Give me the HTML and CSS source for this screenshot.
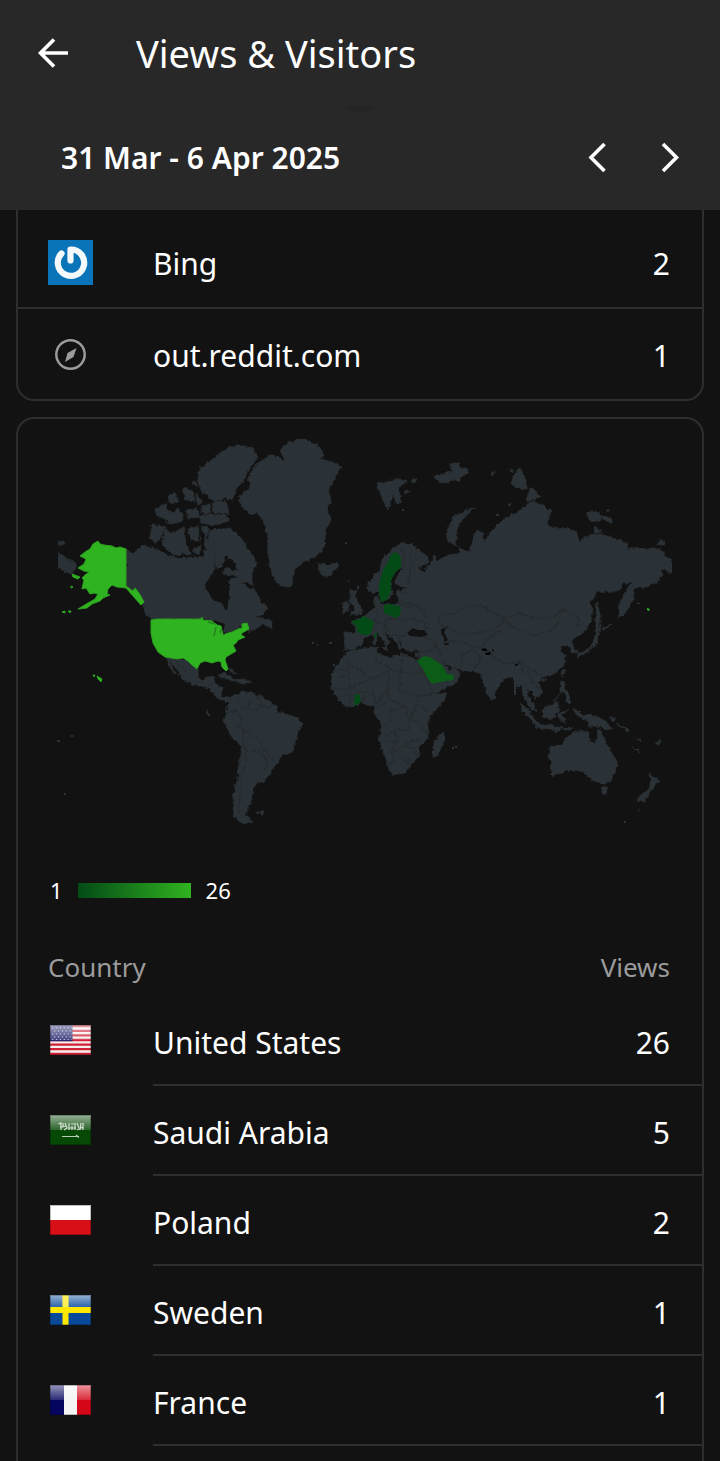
FILE: index.html
```html
<!DOCTYPE html>
<html lang="en">
<head>
<meta charset="utf-8">
<meta name="viewport" content="width=device-width, initial-scale=1">
<title>Views &amp; Visitors</title>
<link rel="stylesheet" href="styles.css">
</head>
<body>
<header class="app-bar">
  <div class="title-row">
    <button class="icon-button" type="button" aria-label="Back">
      <svg viewBox="0 0 48 48" width="48" height="48"><path d="M38 24H11M24 10.500L10.500 24L24 37.500"/></svg>
    </button>
    <h1 class="title">Views &amp; Visitors</h1>
  </div>
  <div class="date-row">
    <p class="date">31 Mar - 6 Apr 2025</p>
    <button class="icon-button" type="button" aria-label="Previous period">
      <svg viewBox="0 0 48 48" width="48" height="48"><path d="M30.500 10L17 23.500L30.500 37"/></svg>
    </button>
    <button class="icon-button" type="button" aria-label="Next period">
      <svg viewBox="0 0 48 48" width="48" height="48"><path d="M17 10L30.500 23.500L17 37"/></svg>
    </button>
  </div>
</header>
<main class="content">
  <section class="card referrers">
    <ul class="ref-list">
      <li class="ref-row">
        <svg class="ref-icon" viewBox="0 0 45 45" width="45" height="45">
          <rect width="45" height="45" fill="#0a74b8"/>
          <path d="M13.500 13.500A13.200 13.200 0 1 0 22.500 9.500V20.500" fill="none" stroke="#f4f9fc" stroke-width="6.200" stroke-linecap="round" stroke-linejoin="round"/>
        </svg>
        <span class="ref-name">Bing</span><span class="ref-views">2</span>
      </li>
      <li class="ref-row">
        <svg class="ref-icon" viewBox="0 0 45 45" width="45" height="45">
          <circle cx="22.500" cy="22.500" r="14.200" fill="none" stroke="#9b9b9b" stroke-width="2.500"/>
          <path d="M28.500 16L25.500 25L17 30L19.500 21Z" fill="#9b9b9b"/>
        </svg>
        <span class="ref-name">out.reddit.com</span><span class="ref-views">1</span>
      </li>
    </ul>
  </section>

  <section class="card countries">
    <svg class="map" viewBox="48 419 624 445" role="img" aria-label="Views by country">
      <defs>
        <filter id="coast" x="0" y="0" width="100%" height="100%">
          <feTurbulence type="fractalNoise" baseFrequency=".22" numOctaves="2" seed="4" result="n"/>
          <feDisplacementMap in="SourceGraphic" in2="n" scale="5" xChannelSelector="R" yChannelSelector="G"/>
        </filter>
      </defs>
      <g class="land" filter="url(#coast)">
        <!-- Chukotka and Wrangel, west of the date line -->
        <path d="M58 551L66 558L77 565L73 572L67 573L58 568ZM58 541L62 541L65 544L58 545Z"/>
        <!-- Canada -->
        <path d="M126 549L133 553L138 549L145 545L152 548L163 552L170 557L183 558L196 557L204 559L205 549L200 540L203 533L209 543L215 553L215 567L210 577L204 585L212 599L222 604L227 612L230 600L230 590L229 580L238 578L250 590L254 586L258 597L268 609L262 615L255 617L266 619L272 621L272 628L262 624L258 628L249 632L247 623L242 624L238 629L222 634L216 624L202 619L152 619L145 613L143 604L133 591L126 586Z"/>
        <!-- Arctic archipelago -->
        <path d="M210 530L230 528L240 537L253 557L258 563L252 570L252 585L244 582L234 575L222 574L226 568L237 571L235 562L225 555L222 566L217 570L215 553L208 543Z"/>
        <path d="M207 463L222 452L233 446L245 446L253 448L258 457L250 468L243 482L235 490L233 500L226 498L214 502L205 493L200 483L200 470Z"/>
        <path d="M212 503L226 501L229 514L213 512ZM200 515L226 515L229 521L214 525L200 523Z"/>
        <path d="M152 525L165 527L163 533L157 543L150 538Z"/>
        <path d="M165 530L173 533L184 528L186 545L192 555L182 554L173 555L162 545Z"/>
        <path d="M155 510L167 502L166 510L173 512L178 508L184 516L182 521L172 525L163 518L157 515ZM168 498L175 492L178 500L173 504ZM183 487L193 492L195 502L185 500ZM195 492L203 502L198 505Z"/>
        <path d="M186 511L196 508L200 517L188 518ZM188 528L199 527L198 541L191 540ZM202 526L209 528L205 543L201 540ZM193 481L196 482L197 488ZM202 506L210 504L210 513L202 513ZM193 548L201 546L200 554L194 553Z"/>
        <path d="M200 467L205 470L210 488L203 493L197 480ZM215 558L219 560L217 568Z"/>
        <!-- Greenland -->
        <path d="M280 450L290 442L302 439L317 444L325 455L320 459L332 462L341 467L333 480L328 493L331 503L327 510L331 520L325 530L325 545L318 555L303 562L295 568L290 588L278 585L272 573L268 553L268 537L263 520L258 513L250 515L242 507L239 497L250 487L248 478L257 463L272 455L282 459Z"/>
        <path d="M318 563L326 565L337 563L338 568L328 577L320 573Z"/>
        <!-- Mexico, Central America, Caribbean -->
        <path d="M165 657L177 659L188 661L192 665L198 669L198 677L203 682L208 677L216 677L213 684L222 687L221 696L232 698L229 702L220 700L210 689L195 685L183 680L176 667L170 661L173 669L178 676L172 671Z"/>
        <path d="M217 675L225 673L236 680L231 681ZM235 680L244 679L251 682L240 684ZM229 667L233 670L236 675L233 674Z"/>
        <!-- South America -->
        <path d="M232 697L242 691L258 695L275 705L278 712L295 717L302 724L297 735L292 752L280 757L278 763L268 775L265 782L257 783L253 790L250 803L245 813L253 822L242 824L234 815L233 797L238 777L242 747L232 737L224 722L227 710Z"/>
        <path d="M257 812L265 812L261 815ZM206 711L209 714L207 716Z"/>
        <!-- Svalbard, Franz Josef, Novaya Zemlya, Severnaya Zemlya -->
        <path d="M377 483L388 482L400 478L407 482L398 488L401 502L397 504L393 495L388 510L382 498ZM412 480L417 479L413 482ZM404 492L411 491L406 494Z"/>
        <path d="M434 477L444 473L452 472L450 464L459 462L460 468L468 469L468 474L460 476L460 482L454 479L449 482L440 483Z"/>
        <path d="M475 507L463 518L457 530L455 540L457 546L447 542L448 530L453 517L467 510Z"/>
        <path d="M514 475L520 468L524 476L527 489L518 488L511 484ZM531 487L536 492L540 498L526 501ZM491 473L495 472L492 476ZM510 470L514 470L512 473ZM587 513L595 511L603 516L600 521L590 521ZM603 516L612 519L611 522L605 521ZM595 525L601 532L594 532ZM658 541L665 541L664 545L657 544ZM606 510L610 510L607 512Z"/>
        <!-- Eurasia -->
        <path d="M368 590L368 582L380 570L383 558L393 548L403 543L413 545L428 558L428 563L420 565L423 572L432 562L433 555L438 561L443 557L462 552L457 547L470 553L472 543L477 530L482 533L484 543L487 537L493 530L503 520L520 510L533 501L550 510L548 525L560 530L568 528L577 532L579 542L584 538L595 533L610 537L627 543L628 549L657 548L672 560L672 573L662 570L660 580L645 588L635 587L633 598L627 610L620 617L619 603L627 590L632 583L624 583L617 592L598 591L590 602L593 610L590 623L580 635L571 641L577 652L572 653L568 645L560 647L565 657L563 667L555 673L543 677L538 682L543 692L535 699L532 692L527 688L527 695L533 703L536 712L530 708L523 695L522 685L517 688L513 677L507 677L500 685L495 692L494 700L491 700L485 687L481 675L477 673L472 670L460 670L448 665L442 662L448 670L454 668L460 673L457 682L433 694L430 685L417 662L420 653L420 649L411 651L403 648L402 641L398 640L403 649L400 650L396 642L390 636L382 629L390 641L387 647L384 642L377 632L373 635L365 637L362 643L355 649L345 650L344 632L357 633L355 625L351 622L363 617L372 610L375 607L374 597L378 596L380 604L390 605L398 603L397 592L408 588L398 586L394 580L402 569L397 567L390 579L392 594L384 602L380 593L374 592Z"/>
        <!-- Britain and Ireland -->
        <path d="M350 590L357 592L355 598L361 606L363 612L350 616L355 608L350 601ZM343 603L349 602L349 611L342 613Z"/>
        <path d="M374 634L377 635L376 644L373 643ZM382 648L388 647L387 651ZM400 654L407 655L402 656ZM415 654L419 653L417 656Z"/>
        <!-- Africa and Madagascar -->
        <path d="M355 650L377 647L378 653L388 658L397 655L415 658L420 668L430 687L433 694L447 694L443 702L427 720L428 738L419 747L419 755L405 773L392 775L385 757L379 742L382 725L374 713L375 707L363 703L348 707L337 698L331 688L333 670L343 658L347 652Z"/>
        <path d="M443 732L445 739L437 757L433 757L433 743Z"/>
        <!-- Sakhalin, Japan, Taiwan -->
        <path d="M597 603L600 615L600 622L597 628L602 625L598 634L596 645L585 653L578 657L577 653L589 649L594 641L596 629L596 615ZM603 628L612 623L605 630ZM617 617L620 614L618 619ZM561 673L564 670L563 677ZM540 680L546 678L543 682Z"/>
        <!-- Philippines and Indonesia -->
        <path d="M561 681L565 682L564 689L569 692L571 704L565 702L566 694L560 691ZM553 701L561 692L556 699Z"/>
        <path d="M519 703L527 708L538 723L534 723L524 713ZM535 723L549 725L562 728L560 731L550 730L536 727ZM542 710L557 701L559 709L553 719L543 717ZM559 713L569 710L562 714L566 722L559 721ZM562 728L573 727L567 730Z"/>
        <path d="M573 709L577 710L582 715L594 715L605 721L612 730L604 729L598 726L590 727L588 720L576 715ZM611 718L616 718L612 722ZM617 724L630 731L628 733ZM636 737L641 741ZM633 747L640 751L638 752ZM655 743L661 740L659 745Z"/>
        <!-- Australia, Tasmania, New Zealand -->
        <path d="M549 755L550 748L562 744L570 735L577 731L588 732L588 739L595 744L599 729L605 741L612 754L617 762L615 772L609 782L600 784L590 778L585 773L577 770L569 770L554 776L551 773L552 764L548 757ZM601 787L607 787L606 794L602 794Z"/>
        <path d="M648 773L655 778L659 781L652 789L644 801L638 802L640 796L648 790L652 782ZM637 811L639 809L638 812Z"/>
      </g>
      <!-- Inland seas and bays -->
      <g class="water">
        <path d="M407 633L413 628L418 630L424 630L428 635L421 637L410 636ZM441 629L448 626L444 632L448 640L449 645L444 645L444 638L441 633Z"/>
        <path d="M205 585L210 577L221 579L229 584L229 597L226 602L226 611L222 603L212 599Z"/>
        <path d="M418 566L424 570L427 567L425 572L420 570ZM201 530L205 534L204 545L207 551L201 548ZM280 451L284 459L283 461L278 454Z"/>
        <path d="M214 620L225 624L223 633L217 627L212 623Z"/>
      </g>
      <!-- National boundaries -->
      <g class="borders" filter="url(#coast)">
        <path d="M439 625L440 615L455 614L463 608L480 605L492 612L503 618L520 613L535 619L554 617L562 609L573 613L580 621L577 626M503 618L512 627L535 636L552 630L557 624L562 609M480 605L488 608M439 625L460 634L473 634L483 632L500 626L505 619M444 642L458 641L473 647L483 647L488 638L503 630M489 650L494 658L507 664L521 662L523 675M461 669L461 655L474 649L481 659L474 669M521 662L528 668L541 675M528 668L532 681L540 690M425 637L434 641L442 657M417 651L427 652L434 648M405 636L391 635M390 618L402 620L412 619L424 622L427 630M398 603L409 607L418 606L428 617M401 548L405 557L402 570M411 549L411 564L408 585M377 607L375 622L383 624L390 630M383 624L391 619M401 592L411 594M400 600L416 606"/>
        <path d="M376 648L376 660L401 675L402 658M348 657L348 663L360 670L372 679L389 671M333 671L349 669M348 663L350 688L331 688M350 688L359 684L372 679M337 697L350 695L350 706M356 692L373 692L376 706M389 671L388 690L377 703M401 675L399 691L419 696L433 694M401 658L403 673L426 673M388 690L389 699L376 709M389 699L405 706L390 712L391 720L382 729M405 706L409 719L408 730L394 729L390 735L382 735M409 719L420 723L428 735M409 719L418 704L428 712M417 703L420 694M394 729L397 741L380 742M397 741L392 751L402 748L410 741L420 740M392 751L393 762L387 764M402 748L415 748L417 758M402 757L407 764L410 761L407 758M347 675L340 677M366 692L362 704"/>
        <path d="M238 697L240 706L249 709L251 700M226 713L236 711L243 720L237 726L244 729L251 735L260 741L263 749L270 755L274 762M244 729L243 742L246 751L259 750L265 758L269 763L264 771M246 751L245 765L241 780L240 795L239 810L242 818M258 696L262 706L268 709L273 704M249 709L258 711L259 704M175 660L190 674M208 687L213 682"/>
      </g>
      <g class="voids"><path d="M481 649L485 648L488 651L483 651ZM485 653L491 652L490 655L486 655ZM492 649L494 650L493 652ZM514 665L520 663L516 666Z"/></g>
      <!-- Countries with views -->
      <path class="high" d="M98 541L100 544L104 545L112 546L116 548L120 547L126 549L126 586L133 591L135 588L139 593L144 602L141 605L133 596L126 588L117 587L112 585L108 589L107 594L110 595L103 598L100 601L92 604L87 608L78 609L88 603L95 599L98 594L94 593L90 594L86 588L82 589L84 580L82 578L85 575L89 572L84 571L78 568L84 564L86 559L80 556L85 552L90 549L93 544ZM72 574L80 577L78 579L73 577ZM62 612L65 611L65 613ZM68 611L71 611L70 613ZM71 586L73 587L71 588ZM93 675L95 675L94 677ZM97 676L102 679L101 682L98 679Z"/>
      <path class="high" d="M151 620L157 619L201 619L202 617L203 620L212 621L217 625L221 626L223 635L228 633L232 632L238 629L242 628L242 624L247 623L249 629L242 633L241 635L245 637L238 640L236 643L233 645L236 651L231 654L226 657L225 660L228 669L226 671L222 667L221 662L218 661L212 663L205 661L200 663L197 669L192 665L188 661L183 658L177 659L165 657L158 652L153 643L151 633Z"/>
      <path class="lake" d="M208 622L216 624M216 627L214 636M221 629L220 633"/>
      <path class="low" d="M397 552L401 558L401 567L395 573L391 581L391 591L387 600L381 602L379 595L379 584L383 570L388 562L391 554ZM384 605L391 604L401 607L400 615L396 618L384 613ZM351 621L357 620L364 616L374 622L373 627L371 633L366 636L357 632L357 627ZM375 633L377 633L376 638L374 637ZM355 695L359 694L361 702L354 706Z"/>
      <path class="mid" d="M417 661L424 656L430 657L442 665L447 674L454 675L453 680L440 682L432 684L427 677L423 669Z"/>
      <path class="dot" d="M647 608L650 609L649 611L647 610Z"/>
      <path class="islands" d="M329 642H332V644H329ZM333 664H335V666H333ZM312 642H314V644H312ZM317 644H318V646H317ZM402 509H404V511H402ZM345 542H347V544H345ZM348 580H349V582H348ZM357 586H359V589H357ZM57 740H60V742H57ZM71 735H73V737H71ZM64 793H66V795H64ZM452 747H454V749H452ZM455 746H457V748H455ZM624 821H626V823H624ZM637 602L641 604H637ZM496 514H499V516H496ZM508 504L512 503L509 507ZM514 680H516V695H514Z"/>
    </svg>
    <div class="legend"><span>1</span><span class="scale"></span><span>26</span></div>
    <table class="table">
      <thead><tr><th colspan="2" scope="col">Country</th><th class="num" scope="col">Views</th></tr></thead>
      <tbody>
        <tr><td class="flag-cell"><svg class="flag" viewBox="0 0 41 30">
          <rect width="41" height="30" fill="#f5eeee"/>
          <path d="M0 1.200H41M0 5.800H41M0 10.400H41M0 15H41M0 19.600H41M0 24.200H41M0 28.800H41" stroke="#cf2035" stroke-width="2.300"/>
          <rect width="22.500" height="16.200" fill="#24256f"/>
          <path d="M2 3H22M4 6H22M2 9H22M4 12H22M2 14.500H22" stroke="#b9b9d8" stroke-width="1" stroke-dasharray="1.300 2.600"/>
          <rect width="41" height="15" fill="url(#gloss)"/><rect class="flag-edge" x=".5" y=".5" width="40" height="29"/>
        </svg></td><td>United States</td><td class="num">26</td></tr>
        <tr><td class="flag-cell"><svg class="flag" viewBox="0 0 41 30">
          <defs><linearGradient id="gloss" x2="0" y2="1"><stop stop-color="#fff" stop-opacity=".58"/><stop offset="1" stop-color="#fff" stop-opacity=".15"/></linearGradient></defs>
          <rect width="41" height="30" fill="#064806"/><rect width="41" height="15" fill="url(#gloss)"/>
          <path d="M8.500 9L11 8V15M13 8V12H10M15 8L17 13L14 15M19 8V15M21 9H24M22 11V15M25 8V15M27 8L29 13M31 8L30 15M33 8V15M10 12L16 11M18 13H26M27 15L33 12" fill="none" stroke="#d7e2d5" stroke-width="1.200"/>
          <path d="M12 21.500H29M26 20L29 22.500" fill="none" stroke="#b9ceb8" stroke-width="1.200"/><rect class="flag-edge" x=".5" y=".5" width="40" height="29"/>
        </svg></td><td>Saudi Arabia</td><td class="num">5</td></tr>
        <tr><td class="flag-cell"><svg class="flag" viewBox="0 0 41 30"><rect width="41" height="30" fill="#fff"/><rect y="15" width="41" height="15" fill="#d90f18"/><rect class="flag-edge" x=".5" y=".5" width="40" height="29"/></svg></td><td>Poland</td><td class="num">2</td></tr>
        <tr><td class="flag-cell"><svg class="flag" viewBox="0 0 41 30"><rect width="41" height="30" fill="#08499a"/><rect width="41" height="12" fill="url(#gloss)"/><path d="M0 15H41M15.500 0V30" stroke="#ffe900" stroke-width="6"/><path d="M12.500 0H18.500V12H12.500Z" fill="#fff" opacity=".35"/><rect class="flag-edge" x=".5" y=".5" width="40" height="29"/></svg></td><td>Sweden</td><td class="num">1</td></tr>
        <tr><td class="flag-cell"><svg class="flag" viewBox="0 0 41 30"><rect width="14" height="30" fill="#05055f"/><rect x="14" width="13" height="30" fill="#f4f4f4"/><rect x="27" width="14" height="30" fill="#d40618"/><rect width="41" height="15" fill="url(#gloss)"/><rect class="flag-edge" x=".5" y=".5" width="40" height="29"/></svg></td><td>France</td><td class="num">1</td></tr>
      </tbody>
    </table>
  </section>
</main>
</body>
</html>
```
FILE: styles.css
```css
* { box-sizing: border-box; }
body {
  margin: 0;
  background: #121212;
  color: #fff;
  font: 30px/40px "Noto Sans", sans-serif;
}
h1, p, ul { margin: 0; padding: 0; }

.app-bar { background: #282828; }
.title-row {
  display: flex;
  align-items: center;
  gap: 58px;
  height: 106px;
  padding: 0 30px;
}
.title { font-size: 38px; font-weight: 400; line-height: 48px; }
.date-row {
  display: flex;
  align-items: center;
  gap: 24px;
  height: 104px;
  padding: 0 26px 0 61px;
  background: radial-gradient(ellipse 20px 9px at 50% 0, #222, #282828);
}
.date { flex: 1; font-weight: 600; }
.icon-button {
  flex: none;
  width: 48px;
  height: 48px;
  padding: 0;
  border: 0;
  background: none;
  color: #fff;
}
.icon-button svg {
  display: block;
  fill: none;
  stroke: currentColor;
  stroke-width: 3.600;
}

.content {
  display: flex;
  flex-direction: column;
  gap: 16px;
  padding: 0 16px;
}
.card { border: 2px solid #2e2e2e; }
.referrers {
  border-top: 0;
  border-radius: 0 0 18px 18px;
  padding-top: 7px;
}
.ref-list { list-style: none; }
.ref-row {
  display: flex;
  align-items: center;
  height: 90px;
  padding: 0 32px 0 30px;
}
.ref-row + .ref-row { box-sizing: content-box; border-top: 2px solid #2e2e2e; }
.ref-icon { flex: none; margin-right: 60px; }
.ref-name, .ref-views { padding-top: 4px; }
.ref-name { flex: 1; }

.countries {
  border-bottom: 0;
  border-radius: 18px 18px 0 0;
  padding-bottom: 15px;
}
.map { display: block; width: calc(100% - 60px); margin: 0 30px; }
.land, .islands { fill: #2c3338; }
.land { stroke: #292e31; stroke-width: 1; }
.water { fill: #121212; }
.voids { fill: #000; }
.borders { fill: none; stroke: #272b2d; stroke-width: 1.500; stroke-linejoin: round; }
.high { fill: #30b320; stroke: #2ca01f; stroke-width: 1; }
.dot { fill: #30b320; }
.mid { fill: #0b5c17; }
.low { fill: #034a16; }
.lake { fill: none; stroke: #268322; stroke-width: 1.500; }

.legend {
  display: flex;
  align-items: center;
  gap: 15px;
  height: 52px;
  padding: 0 32px;
  font-size: 22px;
}
.scale {
  width: 113px;
  height: 15px;
  background: linear-gradient(90deg, #034a16, #30b320);
}

.table { width: 100%; margin-top: 22px; border-collapse: separate; border-spacing: 0; }
.table th {
  height: 58px;
  padding: 0 0 0 30px;
  color: #9b9b9b;
  font-size: 26px;
  font-weight: 400;
  text-align: left;
}
.table td { height: 90px; padding: 5px 0 0; border-bottom: 2px solid #2e2e2e; }
.table .flag-cell { width: 135px; padding: 0 0 0 32px; }
.table .flag-cell { border-bottom-color: transparent; }
.table .num { padding-right: 32px; text-align: right; }
.flag { display: block; width: 41px; height: 30px; }
.flag-edge { fill: none; stroke: #000; stroke-opacity: .25; }
```
